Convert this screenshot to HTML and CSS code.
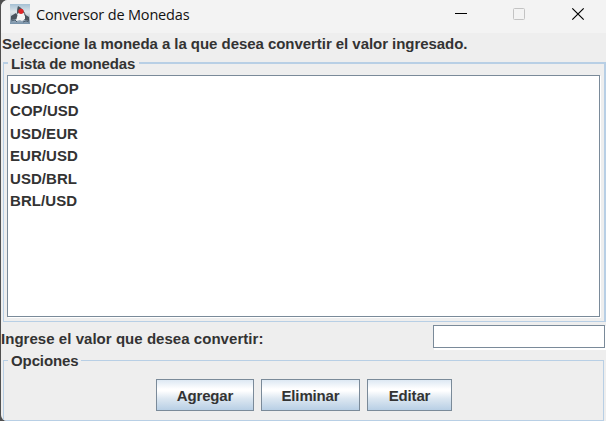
FILE: index.html
```html
<!DOCTYPE html>
<html lang="es">
<head>
<meta charset="utf-8">
<title>Conversor de Monedas</title>
<link rel="stylesheet" href="styles.css">
</head>
<body>
<main class="window">
  <header class="titlebar">
    <svg class="app-icon" width="20" height="20" viewBox="0 0 20 20">
      <defs><linearGradient id="tile" x2="0" y2="1"><stop stop-color="#a4c0d4"/><stop offset=".4" stop-color="#dfe6ea"/><stop offset=".7" stop-color="#b4c0ca"/><stop offset="1" stop-color="#7590a8"/></linearGradient></defs>
      <rect width="20" height="20" fill="url(#tile)"/>
      <path d="M1 12l5-3 2 3-1 3-6 1zM14 10l5 3v4l-5-1z" fill="#4a545e"/>
      <path d="M8 2C7 5 7 7 7 10l3-2 4 1 2 3C15 8 12 4 8 2z" fill="#4a545c"/>
      <path d="M8 10l5-1 2 3v3l-3 2-2-1-4 1 1-4z" fill="#f5f5f5"/>
      <path d="M1 17l4-1 2 2M13 18l3-1 3 1" stroke="#4c5f70" fill="none"/>
      <circle cx="11" cy="7.3" r="2.6" fill="#e02528"/>
    </svg>
    <span class="title">Conversor de Monedas</span>
    <svg class="controls" width="130" height="14" viewBox="0 0 130 14" fill="none">
      <path d="M0 6.5h12" stroke="#000"/>
      <rect x="58.5" y="1.5" width="11" height="11" rx="1" stroke="#c3c3c3"/>
      <path d="M117.3 1.3l11.4 11.4M128.7 1.3l-11.4 11.4" stroke="#000" stroke-width="1.2"/>
    </svg>
  </header>
  <p class="prompt"><span class="prompt-text">Seleccione la moneda a la que desea convertir el valor ingresado.</span></p>
  <section class="group currencies">
    <h2 class="legend"><span>Lista de monedas</span></h2>
    <ul class="list">
      <li>USD/COP</li><li>COP/USD</li><li>USD/EUR</li><li>EUR/USD</li><li>USD/BRL</li><li>BRL/USD</li>
    </ul>
  </section>
  <div class="entry">
    <label for="amount">Ingrese el valor que desea convertir:</label>
    <input id="amount" class="amount" type="text">
  </div>
  <section class="group options">
    <h2 class="legend"><span>Opciones</span></h2>
    <div class="buttons">
      <button class="add">Agregar</button><button class="remove">Eliminar</button><button class="edit">Editar</button>
    </div>
  </section>
</main>
</body>
</html>
```
FILE: styles.css
```css
* { box-sizing: border-box; }
body { margin: 0; background: #505050; overflow: hidden; }
.window {
  width: 605px; height: 421px; margin-left: 1px;
  background: #eee; color: #333;
  border-radius: 7px 0 0 6px; overflow: hidden;
  font: bold 15px/22px "Liberation Sans", Arial, sans-serif;
}
.titlebar {
  height: 33px; padding: 0 22px 0 9px; background: #f3f3f3;
  display: flex; align-items: center;
}
.app-icon { margin-top: -5px; filter: blur(.4px); }
.title {
  margin: -3px 0 0 6px; color: #111; white-space: nowrap;
  font: 14.5px/20px "Open Sans", "Noto Sans", sans-serif; letter-spacing: -.17px;
}
.controls { margin: -5px -1px 0 auto; }
.prompt { height: 29px; margin: 0; padding-left: 1px; white-space: nowrap; letter-spacing: -.047px; }
.group { margin-left: 2px; border: 1px solid #b8cfe5; }
.currencies { width: 603px; height: 260px; border-width: 2px 2px 1px 1px; }
.legend {
  height: 11px; margin: 0; padding-left: 4px; font: inherit;
  line-height: 22px; display: flex; letter-spacing: -.16px;
}
.legend span { height: 20px; margin-top: -11px; padding: 0 4px 0 3px; background: #eee; white-space: nowrap; }
.list {
  width: 593px; height: 242px; margin: 0 0 0 3px; padding: 2px;
  border: 1px solid #7a8a99; background: #fff;
  box-shadow: 1px 1px #fff; list-style: none; line-height: 22.4px; letter-spacing: .06px;
}
.entry { height: 38px; display: flex; justify-content: space-between; }
.entry label { line-height: 33px; white-space: nowrap; letter-spacing: .04px; }
.amount {
  width: 172px; height: 23px; margin: 3px 1px 0 0; padding: 0 3px;
  border: 1px solid #7a8a99; background: #fff; box-shadow: 1px 1px #fff, 1px 2px #fff; font: inherit;
}
.options { width: 601px; height: 61px; }
.options .legend { letter-spacing: -.1px; }
.options .legend span { padding-right: 2px; }
.buttons { display: flex; justify-content: center; gap: 7px; padding: 7px 0 0; }
.buttons button {
  height: 32px; padding: 2px 0 0 1px; border: 1px solid #7a8a99; color: #333; font: inherit; letter-spacing: -.15px;
  background: linear-gradient(#dde8f3, #fff 30%, #fff 36%, #dce7f1 62%, #b8cfe5);
}
.add { width: 98px; }
.remove { width: 99px; }
.edit { width: 85px; }
```
